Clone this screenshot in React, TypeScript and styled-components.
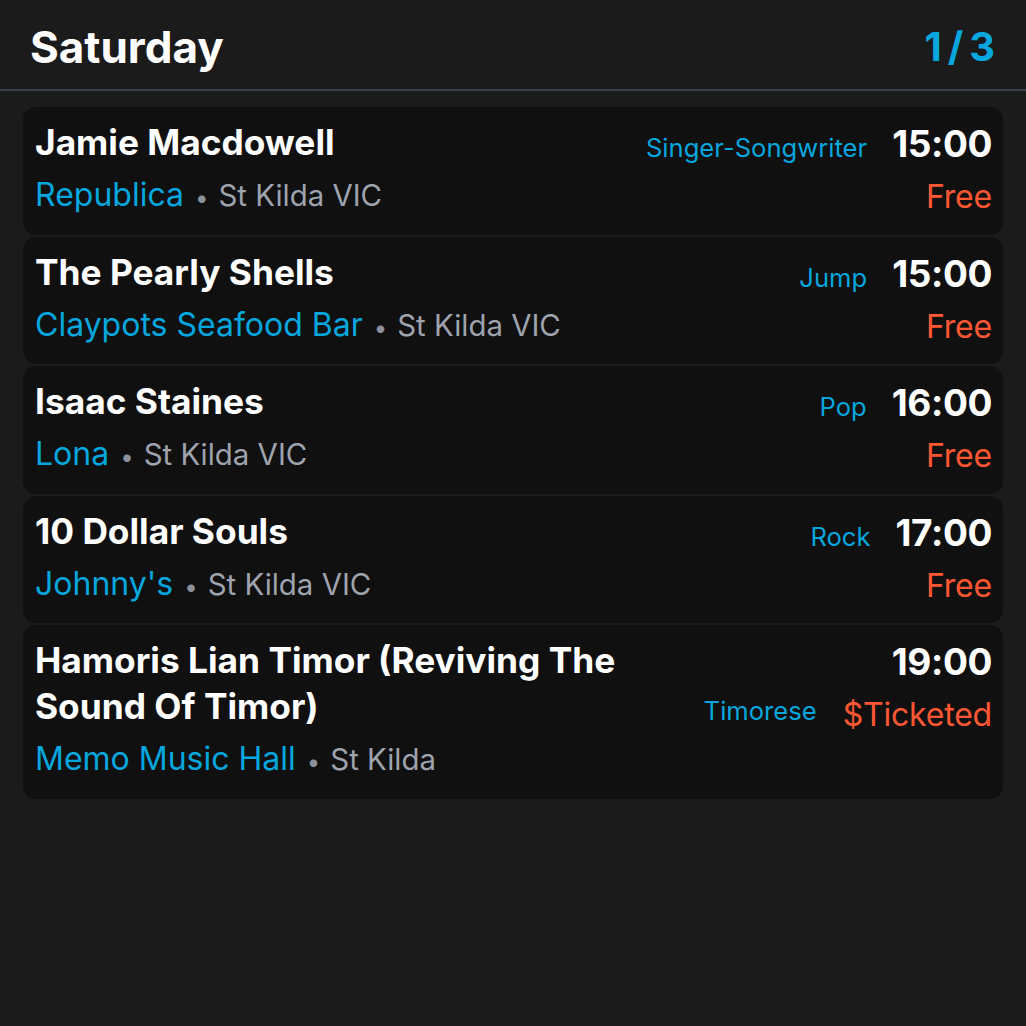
import React from "react";
import styled, { createGlobalStyle } from "styled-components";

const GlobalStyle = createGlobalStyle`
  html, body {
    margin: 0;
    padding: 0;
    background: #1b1b1b;
  }
  body {
    font-family: Inter, "Noto Sans", "Liberation Sans", sans-serif;
    color: #ffffff;
    -webkit-font-smoothing: antialiased;
  }
  * { box-sizing: border-box; }
`;

const Page = styled.div`
  width: 1026px;
  min-height: 1026px;
  background: #1b1b1b;
`;

const Header = styled.header`
  display: flex;
  justify-content: space-between;
  align-items: center;
  padding: 20px 31px 15px 30px;
  border-bottom: 2px solid #3a404b;
`;

const Title = styled.h1`
  margin: 0;
  font-size: 44px;
  line-height: 54px;
  font-weight: 700;
  color: #ffffff;
`;

const PageCount = styled.span`
  font-size: 40px;
  line-height: 54px;
  font-weight: 700;
  color: #06a7df;
  letter-spacing: 6px;
  margin-right: -6px;
`;

const List = styled.div`
  display: flex;
  flex-direction: column;
  gap: 2px;
  padding: 16px 23px;
`;

const Card = styled.div`
  display: flex;
  justify-content: space-between;
  align-items: flex-start;
  gap: 24px;
  background: #101010;
  border-radius: 13px;
  padding: 13px 11px 19.5px 12px;
`;

const Left = styled.div`
  display: flex;
  flex-direction: column;
  min-width: 0;
  flex: 1;
`;

const Name = styled.div<{ $maxWidth?: number }>`
  font-size: 35.3px;
  line-height: 46px;
  font-weight: 700;
  color: #ffffff;
  max-width: ${(p) => (p.$maxWidth ? `${p.$maxWidth}px` : "none")};
`;

const VenueLine = styled.div`
  margin-top: 9px;
  height: 40px;
  font-size: 32px;
  line-height: 40px;
  font-weight: 400;
  display: flex;
  align-items: baseline;
  white-space: nowrap;
`;

const Venue = styled.span`
  color: #06a7df;
`;

const Dot = styled.span`
  color: #8c919b;
  font-size: 24px;
  line-height: 1;
  margin: 0 10px 0 11px;
`;

const Suburb = styled.span`
  color: #9ea3ae;
  font-size: 29.4px;
  line-height: 1;
`;

const Right = styled.div`
  display: flex;
  flex-direction: column;
  align-items: flex-end;
  flex-shrink: 0;
  padding-top: 1px;
`;

const MetaRow = styled.div<{ $align?: "baseline" | "flex-start"; $gap?: number }>`
  display: flex;
  align-items: ${(p) => p.$align ?? "baseline"};
  justify-content: flex-end;
  gap: ${(p) => p.$gap ?? 25}px;
`;

const PriceRow = styled(MetaRow)`
  margin-top: 14px;
`;

const Genre = styled.span`
  font-size: 25.6px;
  line-height: 24px;
  font-weight: 400;
  color: #06a7df;
`;

const Time = styled.span`
  font-size: 37px;
  line-height: 46px;
  font-weight: 700;
  color: #ffffff;
  letter-spacing: -0.4px;
`;

const Price = styled.span`
  font-size: 32px;
  line-height: 32px;
  font-weight: 400;
  color: #ff5733;
  letter-spacing: -0.2px;
`;

type Gig = {
  name: string;
  venue: string;
  suburb: string;
  genre: string;
  time: string;
  price: string;
  genreWithPrice?: boolean;
};

const gigs: Gig[] = [
  { name: "Jamie Macdowell", venue: "Republica", suburb: "St Kilda VIC", genre: "Singer-Songwriter", time: "15:00", price: "Free" },
  { name: "The Pearly Shells", venue: "Claypots Seafood Bar", suburb: "St Kilda VIC", genre: "Jump", time: "15:00", price: "Free" },
  { name: "Isaac Staines", venue: "Lona", suburb: "St Kilda VIC", genre: "Pop", time: "16:00", price: "Free" },
  { name: "10 Dollar Souls", venue: "Johnny's", suburb: "St Kilda VIC", genre: "Rock", time: "17:00", price: "Free" },
  {
    name: "Hamoris Lian Timor (Reviving The Sound Of Timor)",
    venue: "Memo Music Hall",
    suburb: "St Kilda",
    genre: "Timorese",
    time: "19:00",
    price: "$Ticketed",
    genreWithPrice: true,
  },
];

const GigCard: React.FC<{ gig: Gig }> = ({ gig }) => (
  <Card>
    <Left>
      <Name $maxWidth={gig.genreWithPrice ? 600 : undefined}>{gig.name}</Name>
      <VenueLine>
        <Venue>{gig.venue}</Venue>
        <Dot>•</Dot>
        <Suburb>{gig.suburb}</Suburb>
      </VenueLine>
    </Left>
    <Right>
      {gig.genreWithPrice ? (
        <>
          <MetaRow>
            <Time>{gig.time}</Time>
          </MetaRow>
          <PriceRow $align="flex-start" $gap={26}>
            <Genre>{gig.genre}</Genre>
            <Price>{gig.price}</Price>
          </PriceRow>
        </>
      ) : (
        <>
          <MetaRow>
            <Genre>{gig.genre}</Genre>
            <Time>{gig.time}</Time>
          </MetaRow>
          <PriceRow>
            <Price>{gig.price}</Price>
          </PriceRow>
        </>
      )}
    </Right>
  </Card>
);

export default function App() {
  return (
    <Page>
      <GlobalStyle />
      <Header>
        <Title>Saturday</Title>
        <PageCount>1/3</PageCount>
      </Header>
      <List>
        {gigs.map((g) => (
          <GigCard key={g.name + g.time} gig={g} />
        ))}
      </List>
    </Page>
  );
}
